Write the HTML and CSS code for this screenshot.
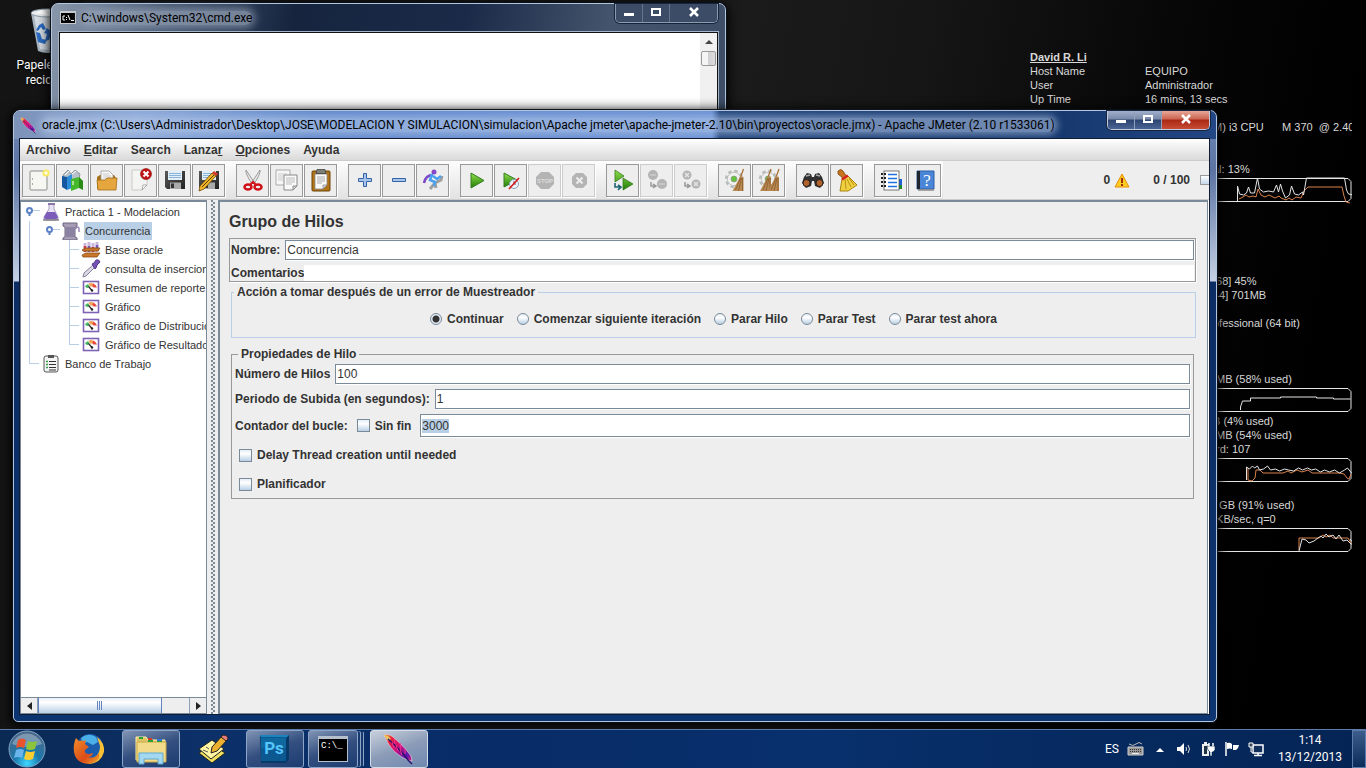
FILE: index.html
```html
<!DOCTYPE html>
<html lang="es">

<head>
    <meta charset="UTF-8">
    <meta name="viewport" content="width=device-width, initial-scale=1.0">
    <title>Apache JMeter</title>
    <link rel="stylesheet" href="styles.css">
</head>

<body>
    <svg class="defs" width="0" height="0" aria-hidden="true">
        <defs>
            <linearGradient id="green" x1="0" y1="0" x2="0" y2="1">
                <stop offset="0" stop-color="#8fe04a" />
                <stop offset="1" stop-color="#237c08" />
            </linearGradient>
            <linearGradient id="feather" x1="0" y1="0" x2="1" y2="1">
                <stop offset="0" stop-color="#f4a020" />
                <stop offset="0.2" stop-color="#e8203c" />
                <stop offset="0.5" stop-color="#d0107c" />
                <stop offset="0.8" stop-color="#5a18b0" />
                <stop offset="1" stop-color="#e02070" />
            </linearGradient>
            <linearGradient id="metal" x1="0" y1="0" x2="1" y2="1">
                <stop offset="0" stop-color="#5a5a5a" />
                <stop offset="1" stop-color="#222" />
            </linearGradient>
            <radialGradient id="orb" cx="0.5" cy="0.9" r="0.8">
                <stop offset="0" stop-color="#3fd8ff" />
                <stop offset="0.45" stop-color="#1a78ac" />
                <stop offset="1" stop-color="#48698c" />
            </radialGradient>
            <linearGradient id="fox" x1="0" y1="0" x2="1" y2="1">
                <stop offset="0" stop-color="#f08c28" />
                <stop offset="0.6" stop-color="#dc4c18" />
                <stop offset="1" stop-color="#f0a830" />
            </linearGradient>
        </defs>
        <symbol id="i-feather" viewBox="0 0 32 32">
            <path d="M1 2c4-1 7 0 10 3 6 5 12 11 17 18l1 5-4-1C17 24 8 17 4 8z" fill="url(#feather)" stroke="#f0d0e0" stroke-width="0.6" />
            <path d="M1 2l4 1 3 3-3 2z" fill="#e8c860" />
            <path d="M5 6c8 7 15 14 20 21l4 4" fill="none" stroke="#22106a" stroke-width="1.4" />
            <path d="M9 9l2 6M13 12l2 6M17 16l2 6M11 6l1 5M17 10l1 6M22 16l0 5" stroke="#f03090" stroke-width="1" fill="none" />
        </symbol>
        <symbol id="i-gauge" viewBox="0 0 20 19">
            <rect x="2.500" y="3.500" width="15" height="12" fill="#fff" stroke="#7d62b5" stroke-width="1.600" />
            <path d="M4 9a6 6 0 0 1 3-3l1.500 2.500-2 1.500z" fill="#3fb45f" />
            <path d="M7.500 5.500a7 7 0 0 1 5 0L11 8.500H9z" fill="#f2a254" />
            <path d="M12.500 5.500A7 7 0 0 1 16 9.500h-3.500L11 8z" fill="#e84b3c" />
            <path d="M7.500 8.500L11 12.500" stroke="#222" stroke-width="1.200" />
            <circle cx="11" cy="12.500" r="1.200" fill="#222" />
        </symbol>
        <symbol id="i-handle" viewBox="0 0 20 19">
            <path d="M11 8.500h8" stroke="#b8cfe5" />
            <path d="M8.500 9v5" stroke="#5b82b8" stroke-width="2" />
            <circle cx="8.500" cy="8.500" r="2.500" fill="#fff" stroke="#5b82c8" stroke-width="2" />
        </symbol>
        <symbol id="i-floppy" viewBox="0 0 24 24">
            <path d="M2 3h20v18H4l-2-2z" fill="url(#metal)" />
            <rect x="5" y="3" width="14" height="9" fill="#e4eef6" />
            <path d="M6 5.500h12M6 7.500h12M6 9.500h12" stroke="#88b4dc" />
            <rect x="7" y="14.500" width="11" height="6.500" fill="#aaa" />
            <rect x="8" y="15.500" width="3" height="4.500" fill="#333" />
        </symbol>
        <symbol id="i-broom" viewBox="0 0 12 24">
            <path d="M11 1L7 12" stroke="#a66a2c" stroke-width="1.2" />
            <path d="M8 8l3 1v14H0z" fill="#b98a52" />
            <path d="M8 10L3 22M9 10L6 23M10 10v13" stroke="#86592a" stroke-width="0.8" fill="none" />
        </symbol>
        <symbol id="i-gear" viewBox="0 0 24 24">
            <circle cx="12" cy="12" r="9" fill="none" stroke="#b9bdb9" stroke-width="4" stroke-dasharray="4 3.070" />
            <circle cx="12" cy="12" r="8" fill="#f0f0f0" stroke="#b9bdb9" />
            <circle cx="12" cy="12" r="3.500" fill="#62c43a" stroke="#8a9a80" />
        </symbol>
    </svg>

    <main class="desktop">
        <div class="shortcut">
            <svg width="40" height="48" viewBox="0 0 40 48" aria-hidden="true">
                <path d="M3 5l7 38q10 4 20 0l7-38z" fill="#a9b6c2" />
                <path d="M6 7l6 34 9 1 7-35z" fill="#d5dde4" />
                <ellipse cx="20" cy="5" rx="17" ry="4" fill="#e8edf0" stroke="#8b99a5" />
                <path d="M8 5l6-3 5 4 6-3 4 3-7 2z" fill="#fff" />
                <path d="M11 17l4-2 3 6-3 1-2-3-3 4-2-1zM19 20l5 4-3 8-4 1 2-7-3-1zM8 24l4 1 2 6 5 1-2 4-7-2z" fill="#2c6cc4" />
            </svg>
            <span>Papelera de reciclaje</span>
        </div>

        <div class="sysinfo">
            <b><u>David R. Li</u></b><span></span>
            <span>Host Name</span><span>EQUIPO</span>
            <span>User</span><span>Administrador</span>
            <span>Up Time</span><span>16 mins, 13 secs</span>
        </div>
        <div class="meters">
            <p>M) i3 CPU      M 370  @ 2.40GHz</p>
            <p></p>
            <p></p>
            <p>al: 13%</p>
            <svg width="139" height="28" viewBox="0 0 139 28">
                <path d="M-5 2.500H135l3 3v17l-3 3H-5" />
                <path class="orange" d="M26 23l4-2 3-2 3 2 4-1 3 1 2-8 3 6 4 2 4-2 6 3 4-2 2 2 5 2 3-2 3 2 4-3 5 1 3-7 4-4h34l2 9 2 6 4 1" />
                <path d="M24.500 25v-15l2 8 4 1 3-2 2-6 2 6 4 0 3-15 2 11 4 3 5-1 5 1 3-7 2 7 2-8 2 7 3 7 4-3 2-9 3 8 4 1 4-3 1 3 3-17h38l2 12 2 4 5 1" />
            </svg>
            <p></p>
            <p></p>
            <p></p>
            <p></p>
            <p></p>
            <p>[68] 45%</p>
            <p>44] 701MB</p>
            <p></p>
            <p>ofessional (64 bit)</p>
            <p></p>
            <p></p>
            <p></p>
            <p> MB (58% used)</p>
            <svg width="139" height="28" viewBox="0 0 139 28">
                <path d="M-5 2.500H135l3 3v17l-3 3H-5M27.500 24v-3l2-6h8v-3h30v-1h36v1h17v1h17" />
            </svg>
            <p>B (4% used)</p>
            <p> MB (54% used)</p>
            <p> rd: 107</p>
            <svg width="139" height="28" viewBox="0 0 139 28">
                <path d="M-5 2.500H135l3 3v17l-3 3H-5" />
                <path class="orange" d="M35 12v12l4 1 3-3 1-8h4l3 3h20l5-2 3 2 6-3 5 2 6-2 4 3h27l5 1 3 4 2 1 2-5" />
                <path d="M33.500 24v-13l3 2 3-3 2 2 3-2 2 4 4-1 4-3 3 4 5-1 4 2 5-2 4 1 5 1 5-3 4 2 5-2 4 2 4-1 5 3 4-2 5 2 5-2 5 3 5-3 3-2 4 5 3 1" />
            </svg>
            <p></p>
            <p>/ GB (91% used)</p>
            <p> KB/sec, q=0</p>
            <svg width="139" height="28" viewBox="0 0 139 28">
                <path d="M-5 2.500H135l3 3v17l-3 3H-5" />
                <path class="orange" d="M86 24v-12h20l4-3 3 2 4-2 3 3h15l3 5" />
                <path d="M86 25l3-12 4 1 3 3 5-2 4-3 3-2 2 2 3-4 3 3 4-2 3 4 3-4 4 6 4-1 4 4h3l-4-5" />
            </svg>
        </div>

        <section class="window cmd">
            <header class="titlebar">
                <svg width="16" height="16" viewBox="0 0 16 16" aria-hidden="true">
                    <rect y="1" width="16" height="13" fill="#c8ccd0" />
                    <rect x="1" y="3" width="14" height="10" />
                    <path d="M5 6H3v4h2M6.500 7v1M6.500 9v1M8 5l2 5M11 10.500h3" fill="none" stroke="#fff" />
                </svg>
                <span class="title">C:\windows\System32\cmd.exe</span>
                <div class="controls">
                    <button aria-label="Minimizar"><svg width="12" height="12"><path d="M1 7h10v3H1z" fill="#fff" /></svg></button>
                    <button aria-label="Maximizar"><svg width="12" height="12"><path d="M2 3h8v6H2z" fill="none" stroke="#fff" stroke-width="2" /></svg></button>
                    <button class="close" aria-label="Cerrar"><svg width="12" height="12"><path d="M2 2l8 8M10 2l-8 8" stroke="#fff" stroke-width="2.500" /></svg></button>
                </div>
            </header>
            <div class="console">
                <div class="vscroll"><i></i><b></b></div>
            </div>
        </section>

        <section class="window jmeter">
            <header class="titlebar">
                <svg width="17" height="17" aria-hidden="true"><use href="#i-feather" /></svg>
                <span class="title">oracle.jmx (C:\Users\Administrador\Desktop\JOSE\MODELACION Y SIMULACION\simulacion\Apache jmeter\apache-jmeter-2.10\bin\proyectos\oracle.jmx) - Apache JMeter (2.10 r1533061)</span>
                <div class="controls">
                    <button aria-label="Minimizar"><svg width="12" height="12"><path d="M1 7h10v3H1z" fill="#fff" /></svg></button>
                    <button aria-label="Maximizar"><svg width="12" height="12"><path d="M2 3h8v6H2z" fill="none" stroke="#fff" stroke-width="2" /></svg></button>
                    <button class="close" aria-label="Cerrar"><svg width="12" height="12"><path d="M2 2l8 8M10 2l-8 8" stroke="#fff" stroke-width="2.500" /></svg></button>
                </div>
            </header>

            <div class="client">
                <nav class="menubar">
                    <button>Archivo</button>
                    <button><u>E</u>ditar</button>
                    <button>Search</button>
                    <button>Lanza<u>r</u></button>
                    <button><u>O</u>pciones</button>
                    <button>Ayuda</button>
                </nav>

                <div class="toolbar">
                    <div class="group">
                        <button aria-label="Nuevo"><svg viewBox="0 0 24 24">
                            <rect x="3" y="3" width="17" height="19" rx="1" fill="#f6f6f3" stroke="#8c8e88" />
                            <path d="M5.500 10v2M5.500 15v2" stroke="#aaa" />
                            <circle cx="19" cy="5" r="3.500" fill="#fbe95c" /><circle cx="19" cy="5" r="1.800" fill="#fffde0" />
                        </svg></button>
                        <button aria-label="Plantillas"><svg viewBox="0 0 24 24">
                            <path d="M2 7l5-5 3 4 4-4 5 4-2 9H4z" fill="#b9c2ca" stroke="#8c959c" />
                            <path d="M4 7l4-4M10 7l5-4" stroke="#fff" />
                            <path d="M1 8l5 1v13l-5-3z" fill="#1458a0" />
                            <path d="M6 9l5-3v14l-5 2z" fill="#2b8cd8" />
                            <path d="M10 11l8-2v11l-8 3z" fill="#45b82c" />
                            <path d="M18 9l4 4v9l-4-2z" fill="#2a8c16" />
                            <path d="M12 13v4" stroke="#c8f0b8" stroke-width="1.500" />
                        </svg></button>
                        <button aria-label="Abrir"><svg viewBox="0 0 24 24">
                            <path d="M2 9l3-2h14l2 3v11H2z" fill="#a8701c" />
                            <path d="M6 3h8l4 4v8H6z" fill="#f8f8f8" stroke="#999" stroke-width="0.8" />
                            <path d="M8 6h6M8 8h8M8 10h8" stroke="#bbb" stroke-width="0.8" />
                            <path d="M2 12h8l2-2h10l-1 12H3z" fill="#e6a63e" stroke="#a36c18" stroke-width="0.8" />
                        </svg></button>
                        <button aria-label="Cerrar"><svg viewBox="0 0 24 24">
                            <path d="M3 2h15v15l-5 5H3z" fill="#f4f4f2" stroke="#c0c0bc" stroke-width="0.8" />
                            <path d="M18 17l-5 5 1-5z" fill="#fff" stroke="#999" stroke-width="0.8" />
                            <circle cx="17" cy="6" r="5.500" fill="#c01414" stroke="#8c0c0c" stroke-width="0.6" />
                            <path d="M14.500 3.500l5 5M19.500 3.500l-5 5" stroke="#fff" stroke-width="2" />
                        </svg></button>
                        <button aria-label="Guardar"><svg><use href="#i-floppy" /></svg></button>
                        <button aria-label="Guardar como"><svg viewBox="0 0 24 24">
                            <use href="#i-floppy" />
                            <path d="M3 18L15 5l4 3L7 21l-5 2z" fill="#f0b429" stroke="#6c4a08" stroke-width="0.8" />
                            <path d="M15 5l2-2 4 3-2 2z" fill="#d83a28" />
                            <path d="M5 19L17 7" stroke="#5a3e08" />
                        </svg></button>
                    </div>
                    <div class="group">
                        <button aria-label="Cortar"><svg viewBox="0 0 24 24">
                            <path d="M5 2q-1 3 6 14l2-2zM19 2q1 3-6 14l-2-2z" fill="#e8e8e8" stroke="#888" stroke-width="0.800" />
                            <ellipse cx="7" cy="19" rx="3.500" ry="2.500" fill="none" stroke="#d01018" stroke-width="2.500" />
                            <ellipse cx="17" cy="19" rx="3.500" ry="2.500" fill="none" stroke="#d01018" stroke-width="2.500" />
                            <path d="M9 17l3-3 3 3" stroke="#d01018" stroke-width="2" fill="none" />
                        </svg></button>
                        <button aria-label="Copiar"><svg viewBox="0 0 24 24">
                            <path d="M1 2h14v15H1z" fill="#f6f6f6" stroke="#aaa" />
                            <path d="M3 6h9M3 8h9M3 10h5M3 12h5" stroke="#ccc" />
                            <path d="M9 7h13v11l-4 4H9z" fill="#fafafa" stroke="#888" />
                            <path d="M11 10h9M11 12h9M11 14h9M11 16h6" stroke="#bbb" />
                            <path d="M22 18h-4v4z" fill="#ddd" stroke="#888" />
                        </svg></button>
                        <button aria-label="Pegar"><svg viewBox="0 0 24 24">
                            <rect x="3" y="3" width="18" height="20" rx="1" fill="#b27418" stroke="#6c4408" />
                            <path d="M6 6h12v11l-4 4H6z" fill="#fafafa" stroke="#888" stroke-width="0.800" />
                            <path d="M8 1.500h8l1 4H7z" fill="#7c8078" stroke="#444" stroke-width="0.800" />
                            <path d="M8 9h8M8 11h8M8 13h8M8 15h5" stroke="#aaa" />
                            <path d="M18 17h-4v4z" fill="#ddd" stroke="#888" stroke-width="0.800" />
                        </svg></button>
                    </div>
                    <div class="group">
                        <button aria-label="Expandir"><svg viewBox="0 0 24 24"><path d="M10.500 5.500h3v5h5v3h-5v5h-3v-5h-5v-3h5z" fill="#a8c4ec" stroke="#3464a4" /></svg></button>
                        <button aria-label="Contraer"><svg viewBox="0 0 24 24"><path d="M5.500 10.500h13v3h-13z" fill="#a8c4ec" stroke="#3464a4" /></svg></button>
                        <button aria-label="Conmutar"><svg viewBox="0 0 24 24">
                            <path d="M9 21l5-6 6-3 1-4M14 15l1 5" stroke="#a0a0a0" stroke-width="3" fill="none" />
                            <path d="M3 15c1-5 4-8 9-8" stroke="#7a48c8" stroke-width="2.500" fill="none" />
                            <circle cx="13" cy="4" r="2.500" fill="#8448c8" />
                            <path d="M11 6l-2 6 5 2-1 4M12 8l4 3 4-3" stroke="#48a0f0" stroke-width="2.500" fill="none" />
                        </svg></button>
                    </div>
                    <div class="group">
                        <button aria-label="Arrancar"><svg viewBox="0 0 24 24"><path d="M6 5l13 7.500L6 20z" fill="url(#green)" stroke="#357c20" /></svg></button>
                        <button aria-label="Arrancar sin pausas"><svg viewBox="0 0 24 24">
                            <path d="M5 5l13 7-13 7z" fill="url(#green)" stroke="#357c20" />
                            <circle cx="15" cy="16" r="4.500" fill="#eef4fa" stroke="#8aa4bc" /><path d="M15 13v3h2" stroke="#557" fill="none" />
                            <path d="M10 21L20 10" stroke="#d81818" stroke-width="1.600" />
                        </svg></button>
                        <button disabled aria-label="Parar"><svg viewBox="0 0 24 24"><path d="M8 4h8l5 5v7l-5 5H8l-5-5V9z" fill="#b4b4b4" /><text x="12" y="15" class="stop-text">STOP</text></svg></button>
                        <button disabled aria-label="Apagar"><svg viewBox="0 0 24 24"><path d="M9 5h7l4 4v7l-4 4H9l-4-4V9z" fill="#b4b4b4" /><path d="M9.500 9.500l6 6M15.500 9.500l-6 6" stroke="#eee" stroke-width="2" /></svg></button>
                    </div>
                    <div class="group">
                        <button aria-label="Arranque remoto"><svg viewBox="0 0 24 24">
                            <path d="M4 2l9 6-9 6zM12 10l10 6-10 6z" fill="url(#green)" stroke="#357c20" stroke-width="0.800" />
                            <path d="M4 15v4h5M7 17l3 2-3 3" fill="none" stroke="#1d6474" stroke-width="1.600" />
                        </svg></button>
                        <button disabled aria-label="Parada remota"><svg viewBox="0 0 24 24">
                            <circle cx="8" cy="7" r="5" fill="#b4b4b4" /><circle cx="17" cy="16" r="5" fill="#b4b4b4" />
                            <path d="M5 7h6M14 16h6" stroke="#ccc" stroke-width="1.500" />
                            <path d="M6 14v4h4M8 16l3 2-3 2" fill="none" stroke="#999" stroke-width="1.500" />
                        </svg></button>
                        <button disabled aria-label="Apagado remoto"><svg viewBox="0 0 24 24">
                            <circle cx="8" cy="7" r="4.500" fill="#b4b4b4" /><circle cx="17" cy="16" r="4.500" fill="#b4b4b4" />
                            <path d="M6 5l4 4M10 5L6 9M15 14l4 4M19 14l-4 4" stroke="#e4e4e4" stroke-width="1.500" />
                            <path d="M6 14v4h4M8 16l3 2-3 2" fill="none" stroke="#999" stroke-width="1.500" />
                        </svg></button>
                    </div>
                    <div class="group">
                        <button aria-label="Limpiar"><svg viewBox="0 0 24 24"><use href="#i-gear" x="1" y="1" width="20" height="20" /><use href="#i-broom" x="9" y="0" width="13" height="24" /></svg></button>
                        <button aria-label="Limpiar todo"><svg viewBox="0 0 24 24"><use href="#i-gear" x="1" y="1" width="20" height="20" /><use href="#i-broom" x="3" y="0" width="12" height="24" /><use href="#i-broom" x="11" y="0" width="12" height="24" /></svg></button>
                    </div>
                    <div class="group">
                        <button aria-label="Buscar"><svg viewBox="0 0 24 24">
                            <path d="M6 5l4 1 1 3h2l1-3 4-1 3 4 2 6-4 5-5-2-1-5h-2l-1 5-5 2-4-5 2-6z" fill="#303030" />
                            <path d="M5 8l4-1M15 7l4 1" stroke="#aaa" stroke-width="1.500" />
                            <circle cx="5.500" cy="15" r="3.500" fill="#b4622c" stroke="#222" /><circle cx="18.500" cy="15" r="3.500" fill="#b4622c" stroke="#222" />
                        </svg></button>
                        <button aria-label="Reiniciar búsqueda"><svg viewBox="0 0 24 24">
                            <path d="M3 3q3-3 5 0l4 6-3 2-6-5z" fill="#c8741c" stroke="#7c4408" stroke-width="0.800" />
                            <path d="M7 11l6-3 9 9-9 6H5z" fill="#f0d040" stroke="#a8840c" />
                            <path d="M7 11.500l6-4" stroke="#d82020" stroke-width="2.500" />
                            <path d="M10 11l1 10M12 11l4 8M14 10l5 7" stroke="#b89014" fill="none" />
                        </svg></button>
                    </div>
                    <div class="group">
                        <button aria-label="Funciones"><svg viewBox="0 0 24 24">
                            <path d="M19 11h4v6h-4z" fill="#2060d8" /><path d="M19 17h4v4h-4z" fill="#18882c" />
                            <rect x="5" y="3" width="15" height="19" fill="#fff" stroke="#555" stroke-width="0.800" />
                            <path d="M9 6.500h9M9 10.500h9M9 14.500h9M9 18.500h9" stroke="#1e70dc" stroke-width="1.600" />
                            <path d="M2 6h5M2 10h5M2 14h5M2 18h5" stroke="#222" stroke-width="2" stroke-dasharray="2 1" />
                        </svg></button>
                        <button aria-label="Ayuda"><svg viewBox="0 0 24 24">
                            <path d="M4 3h17v18H4z" fill="#4a86d8" stroke="#2c5ea8" /><path d="M4 3h3v18H4z" fill="#20242c" />
                            <path d="M5 22h16" stroke="#888" stroke-width="1.500" />
                            <text x="14" y="18" class="help-text">?</text>
                        </svg></button>
                    </div>
                    <div class="status">
                        <span>0</span>
                        <svg class="warn" width="16" height="15" viewBox="0 0 16 15"><path d="M8 1l7 13H1z" fill="#fccc20" stroke="#e89008" stroke-linejoin="round" /><path d="M8 5v5M8 11v2" stroke="#a02c08" stroke-width="2" /></svg>
                        <span class="threads">0 / 100</span>
                        <i class="lamp"></i>
                    </div>
                </div>

                <div class="split">
                    <aside class="tree-pane">
                        <ul class="tree">
                            <li>
                                <svg class="cell"><use href="#i-handle" /></svg>
                                <svg class="icon" viewBox="0 0 20 19">
                                    <path d="M8 2h5v5l4 8q1 3-2 3H5q-3 0-2-3l5-8z" fill="#e8e2f4" stroke="#a8a0c0" /><path d="M6 10h8l3 5q0 2-2 2H5q-2 0-2-2z" fill="#7c5cb8" /><path d="M7 2h7" stroke="#8878a8" stroke-width="2" /><path d="M2 18h16" stroke="#555" />
                                </svg>
                                <span>Practica 1 - Modelacion</span>
                            </li>
                            <li>
                                <i class="cell line"></i>
                                <svg class="cell"><use href="#i-handle" /></svg>
                                <svg class="icon" viewBox="0 0 20 19">
                                    <path d="M2 2h14v3l-2 1v10l2 1v2H2v-2l2-1V6L2 5z" fill="#a79db6" stroke="#6c6480" /><path d="M5 7h8M5 9h8M5 11h8M5 13h8M5 15h8" stroke="#71678c" /><path d="M14 8q4-4 4 0v3" fill="none" stroke="#9a86b8" stroke-width="1.500" />
                                </svg>
                                <span class="selected">Concurrencia</span>
                            </li>
                            <li>
                                <i class="cell line"></i><i class="cell"></i><i class="cell tee"></i>
                                <svg class="icon" viewBox="0 0 20 19">
                                    <path d="M4 3v9M8 2v10M12 3v9M16 2v10" stroke="#c8b8dc" stroke-width="3" /><path d="M4 6v6M12 7v5" stroke="#d03844" stroke-width="2.500" /><path d="M8 6v6M16 5v6" stroke="#7858b4" stroke-width="2.500" /><path d="M1 10l4-2h14l-2 3H2zM1 15l4-2h14l-3 4H2z" fill="#c8782c" stroke="#8c4c14" stroke-width="0.800" />
                                </svg>
                                <span>Base oracle</span>
                            </li>
                            <li>
                                <i class="cell line"></i><i class="cell"></i><i class="cell tee"></i>
                                <svg class="icon" viewBox="0 0 20 19">
                                    <path d="M2 18l1-4L12 6l2 2-9 9z" fill="#ddd8e8" stroke="#86809a" /><path d="M11 5l2-1 2-3q3-1 4 2l-3 3-1 3-1 1z" fill="#7452b4" stroke="#54388c" />
                                </svg>
                                <span>consulta de insercion</span>
                            </li>
                            <li>
                                <i class="cell line"></i><i class="cell"></i><i class="cell tee"></i>
                                <svg class="icon"><use href="#i-gauge" /></svg>
                                <span>Resumen de reporte</span>
                            </li>
                            <li>
                                <i class="cell line"></i><i class="cell"></i><i class="cell tee"></i>
                                <svg class="icon"><use href="#i-gauge" /></svg>
                                <span>Gráfico</span>
                            </li>
                            <li>
                                <i class="cell line"></i><i class="cell"></i><i class="cell tee"></i>
                                <svg class="icon"><use href="#i-gauge" /></svg>
                                <span>Gráfico de Distribución</span>
                            </li>
                            <li>
                                <i class="cell line"></i><i class="cell"></i><i class="cell ell"></i>
                                <svg class="icon"><use href="#i-gauge" /></svg>
                                <span>Gráfico de Resultados</span>
                            </li>
                            <li>
                                <i class="cell ell"></i>
                                <svg class="icon" viewBox="0 0 20 19">
                                    <rect x="3" y="2" width="14" height="16" rx="2" fill="#f4f4f4" stroke="#555" /><path d="M7 1h6v3H7z" fill="#555" /><path d="M8 7.500h7M8 10.500h7M8 13.500h7M8 16h7" stroke="#333" /><path d="M5 7.500h2M5 10.500h2M5 13.500h2" stroke="#38a048" stroke-width="1.500" />
                                </svg>
                                <span>Banco de Trabajo</span>
                            </li>
                        </ul>
                        <div class="hscroll">
                            <button aria-label="Izquierda"><svg width="5" height="8"><path d="M5 0v8L0 4z" fill="#222" /></svg></button>
                            <div class="track"><i class="thumb"></i></div>
                            <button aria-label="Derecha"><svg width="5" height="8"><path d="M0 0v8l5-4z" fill="#222" /></svg></button>
                        </div>
                    </aside>
                    <div class="divider"></div>

                    <form class="panel">
                        <h1>Grupo de Hilos</h1>
                        <div class="naming">
                            <div class="row">
                                <label for="nombre">Nombre:</label>
                                <input class="field" type="text" id="nombre" value="Concurrencia">
                            </div>
                            <div class="row comments">
                                <label for="comentarios">Comentarios</label>
                                <input type="text" id="comentarios">
                            </div>
                        </div>

                        <fieldset class="on-error">
                            <legend>Acción a tomar después de un error de Muestreador</legend>
                            <label><input type="radio" name="accion" checked>Continuar</label>
                            <label><input type="radio" name="accion">Comenzar siguiente iteración</label>
                            <label><input type="radio" name="accion">Parar Hilo</label>
                            <label><input type="radio" name="accion">Parar Test</label>
                            <label><input type="radio" name="accion">Parar test ahora</label>
                        </fieldset>

                        <fieldset class="threads-box">
                            <legend>Propiedades de Hilo</legend>
                            <div class="row">
                                <label for="hilos">Número de Hilos</label>
                                <input class="field" type="text" id="hilos" value="100">
                            </div>
                            <div class="row">
                                <label for="subida">Periodo de Subida (en segundos):</label>
                                <input class="field" type="text" id="subida" value="1">
                            </div>
                            <div class="row loop">
                                <label for="bucle">Contador del bucle:</label>
                                <label class="check"><input type="checkbox">Sin fin</label>
                                <input class="field" type="text" id="bucle" value="3000">
                            </div>
                            <label class="check"><input type="checkbox">Delay Thread creation until needed</label>
                            <label class="check"><input type="checkbox">Planificador</label>
                        </fieldset>
                    </form>
                </div>
            </div>
        </section>
    </main>

    <footer class="taskbar">
        <button class="start" aria-label="Inicio"><svg width="38" height="38" viewBox="0 0 38 38">
            <circle cx="19" cy="19" r="18" fill="url(#orb)" stroke="#7fa4c4" />
            <path d="M4 14a16 16 0 0 1 30 0q-15 6-30 0z" fill="#fff" opacity="0.300" />
            <path d="M10 10q4-3 8 0l-2 8q-4-2-8 0z" fill="#e8542c" />
            <path d="M20 11q4 2 9 0l-2 8q-5 2-9 0z" fill="#8cc43c" />
            <path d="M8 20q4-2 8 0l-2 8q-4-2-8 0z" fill="#6cb4ec" />
            <path d="M18 21q4 2 9 0l-2 8q-5 2-9 0z" fill="#fccc30" />
        </svg></button>
        <button class="task bare" aria-label="Firefox"><svg width="32" height="32" viewBox="0 0 32 32">
            <circle cx="17" cy="14" r="13" fill="#1c5cac" />
            <path d="M8 5q7-6 15-1l2 5-5 3-6-3-4 2z" fill="#4cb0e8" />
            <path d="M24 4q8 6 7 15-3 11-15 12l-2-4q13-2 13-14z" fill="#f8c034" />
            <path d="M3 5l3 3q3-1 5 0l2-1-1 4 4 3-4 3q-1 4 4 4l4-1q-1 4-5 4 7 2 11-4 2 8-9 11Q3 31 1 19 0 11 3 5z" fill="url(#fox)" />
        </svg></button>
        <button class="task" aria-label="Explorador"><svg width="34" height="32" viewBox="0 0 34 32">
            <path d="M2 4h10l2 3h17v20H2z" fill="#e0c464" stroke="#fff0b0" />
            <path d="M3 9h29v20H3z" fill="#f2dc8c" stroke="#c8a848" />
            <path d="M5 5h4M14 8h5M23 8h5" stroke="#28a038" stroke-width="2" /><path d="M14 6h4" stroke="#d83828" stroke-width="2" /><path d="M23 7h5" stroke="#2c78d4" stroke-width="2" />
            <path d="M5 31V20h24v11h-5v-5H10v5z" fill="#a4d8f0" stroke="#5ca8d0" />
        </svg></button>
        <button class="task bare" aria-label="Notas"><svg width="32" height="32" viewBox="0 0 32 32">
            <path d="M2 20l13-9 13 9-13 10z" fill="#f0e060" stroke="#222" /><path d="M2 16l13-9 12 9-13 10z" fill="#fff6a4" stroke="#222" />
            <path d="M14 20l1-6L26 2l5 4-11 12z" fill="#ecb030" stroke="#222" /><path d="M24 4l2-2q5 0 5 4l-2 2z" fill="#e47c7c" stroke="#222" /><path d="M6 17l5 2M9 14l3 2" stroke="#555" />
        </svg></button>
        <button class="task" aria-label="Photoshop"><svg width="30" height="30" viewBox="0 0 30 30"><path d="M0 1h29v24l-3 4H1z" fill="#063a68" /><path d="M0 1h29l-3 3H1z" fill="#1c84bc" /><path d="M1 3h25v24H1z" fill="#0c5890" /><path d="M1 4h25v10H1z" fill="#1068a0" /><text x="14" y="20" class="ps-text">Ps</text></svg></button>
        <button class="task stacked" aria-label="Símbolo del sistema"><svg width="30" height="26" viewBox="0 0 30 26"><path d="M0 0h30v26H0z" fill="#b4c0cc" /><path d="M1 3h28v22H1z" /><text x="3" y="12" class="dos-text">C:\_</text></svg></button>
        <button class="task active" aria-label="Apache JMeter"><svg width="32" height="32"><use href="#i-feather" /></svg></button>

        <div class="tray">
            <span class="lang">ES</span>
            <svg width="17" height="16" viewBox="0 0 17 16"><path d="M2 3q4 3 7 0t6 0" fill="none" stroke="#bbb" /><path d="M1 6h15v8H1z" fill="#999" stroke="#ccc" /><path d="M3 8.500h11M3 10.500h11" stroke="#333" stroke-dasharray="1 1" /><path d="M5 12.500h7" stroke="#eee" /></svg>
            <svg class="more" width="8" height="16" viewBox="0 0 8 16"><path d="M0 11l4-4 4 4z" fill="#fff" /></svg>
            <svg width="16" height="16" viewBox="0 0 16 16"><path d="M1 6h3l4-4v12l-4-4H1z" fill="#fff" /><path d="M10 6q1 2 0 4M12 4q3 4 0 8" fill="none" stroke="#ddd" /></svg>
            <svg width="16" height="16" viewBox="0 0 16 16"><path d="M2 3h7v12H2zM4 1h3v2H4z" fill="#eee" /><path d="M4 5h3v8H4z" fill="#234" /><path d="M7 5h8v4l-2 2h-1v4h-2v-4L8 9z" fill="#fff" stroke="#00204a" stroke-width="0.600" /><path d="M9 2v3M13 2v3" stroke="#fff" stroke-width="1.500" /></svg>
            <svg width="16" height="16" viewBox="0 0 16 16"><path d="M2 1v14" stroke="#fff" stroke-width="1.500" /><path d="M3 2q3-1 5 1v5Q6 7 3 8z" fill="#fff" /><path d="M9 4h6l-1 3-2 2H9z" fill="#fff" /></svg>
            <svg width="16" height="16" viewBox="0 0 16 16"><path d="M5 4h10v8H5z" fill="#12305c" stroke="#fff" stroke-width="1.500" /><path d="M6 14.500h8M10 12v2" stroke="#fff" stroke-width="1.500" /><path d="M1 2h4v4H1zM3 6v5h2" fill="#345" stroke="#fff" /></svg>
            <time class="clock">1:14<br>13/12/2013</time>
            <button class="show-desktop" aria-label="Mostrar escritorio"></button>
        </div>
    </footer>

    <script>
        // foco inicial con el valor del bucle seleccionado
        const bucle = document.getElementById('bucle');
        bucle.focus();
        bucle.select();
    </script>
</body>

</html>
```
FILE: styles.css
```css
* {
    box-sizing: border-box;
}

body {
    margin: 0;
    height: 100vh;
    display: flex;
    flex-direction: column;
    overflow: hidden;
    font-family: "Liberation Sans", Arial, sans-serif;
    font-size: 12px;
    background: #000;
}

button,
input {
    font: inherit;
    color: inherit;
    margin: 0;
    padding: 0;
    border: 0;
    background: none;
    outline: none;
}

.defs {
    position: absolute;
}

.desktop {
    position: relative;
    flex: 1;
    overflow: hidden;
    background: linear-gradient(100deg, #141414 0%, #1b1b1b 50%, #161616 62%, #060606 80%, #000 92%);
}

.shortcut {
    position: absolute;
    left: 10px;
    top: 8px;
    width: 76px;
    display: flex;
    flex-direction: column;
    align-items: center;
    gap: 2px;
    text-align: center;
    color: #fff;
    font-family: Roboto, sans-serif;
    line-height: 15px;
    text-shadow: 0 1px 2px #000;
}

/* monitor del escritorio */
.sysinfo,
.meters {
    position: absolute;
    color: #d8d8d8;
    font-size: 11px;
    line-height: 14px;
}

.sysinfo {
    left: 1030px;
    top: 50px;
    display: grid;
    grid-template-columns: 115px auto;
}

.meters {
    left: 1213px;
    top: 120px;
    width: 139px;
    overflow: hidden;
    white-space: pre;
    display: flex;
    flex-direction: column;
}

.meters p {
    margin: 0;
    height: 14px;
}

.meters svg path {
    fill: none;
    stroke: #e4e4e4;
}

.meters svg .orange {
    stroke: #d8824a;
}

/* ventanas */
.window {
    position: absolute;
    display: flex;
    flex-direction: column;
    padding: 0 7px 7px;
    border: 1px solid #b4c4dc;
    border-radius: 7px 7px 5px 5px;
    box-shadow: 0 0 0 1px #0a1018, 0 2px 12px 2px #000;
}

.titlebar {
    display: flex;
    align-items: center;
    gap: 5px;
    height: 28px;
    font-family: Roboto, sans-serif;
    color: #000;
}

.title {
    margin-right: auto;
    border-radius: 8px;
    line-height: 14px;
    white-space: nowrap;
}

.controls {
    align-self: flex-start;
    display: flex;
    border: 1px solid #c0cce0;
    border-top: 0;
    border-radius: 0 0 5px 5px;
    overflow: hidden;
    box-shadow: 0 0 0 1px #18243c;
}

.controls button {
    width: 27px;
    height: 18px;
    border-right: 1px solid #93a1b8;
    background: linear-gradient(#a0b0cc 0%, #7888a8 45%, #2c4470 50%, #4a6494 100%);
}

.controls .close {
    width: 47px;
    border-right: 0;
    background: linear-gradient(#e8a898 0%, #cc6450 45%, #a82814 50%, #c84c34 100%);
}

.cmd {
    left: 51px;
    top: 3px;
    width: 675px;
    height: 260px;
    background: linear-gradient(100deg, #8a98ac 0%, #445670 16%, #16243e 34%, #1a2a48 58%, #44546c 78%, #3c4c66 100%);
}

.cmd .titlebar {
    padding-left: 1px;
}

.cmd .title {
    background: rgba(150, 162, 182, 0.7);
    box-shadow: 0 0 8px 3px rgba(150, 162, 182, 0.7);
}

.cmd .controls button {
    background: #3c4c66;
    border-color: #64748c;
}

.cmd .controls {
    border-color: #8c9cb0;
}

.console {
    flex: 1;
    display: flex;
    justify-content: flex-end;
    border: 1px solid #111;
    outline: 1px solid #a4b4c8;
    background: #fff;
}

.vscroll {
    width: 17px;
    display: flex;
    flex-direction: column;
    align-items: center;
    background: #f0f0f0;
}

.vscroll i {
    margin: 7px 0;
    border: 4px solid transparent;
    border-top: 0;
    border-bottom: 4px solid #444;
}

.vscroll b {
    width: 15px;
    height: 15px;
    border: 1px solid #999;
    border-radius: 2px;
    background: linear-gradient(90deg, #f4f4f4 45%, #d0d0d4 50%, #ddd);
}

.jmeter {
    left: 13px;
    top: 110px;
    right: 149px;
    bottom: 7px;
    padding-left: 6px;
    background: linear-gradient(#7088b4 0, #5c74a4 60px, #c4d0e4 170px, #0c2c64 171px, #0c3470 100%);
}

.jmeter .titlebar {
    margin: 0 -7px 0 -6px;
    padding: 0 6px;
    border-radius: 6px 6px 0 0;
    background: linear-gradient(90deg, #7c92b8 0, #8ca8d8 120px, #6088cc 300px, #6890d4 698px, #1c4078 706px, #16386e 1040px, #234684 100%);
}

.jmeter .title {
    background: rgba(180, 200, 232, 0.55);
    box-shadow: 0 0 7px 3px rgba(180, 200, 232, 0.55);
}

.client {
    flex: 1;
    min-height: 0;
    display: flex;
    flex-direction: column;
    outline: 1px solid #101c34;
    background: #eee;
    color: #333;
}

.menubar {
    display: flex;
    align-items: center;
    gap: 13px;
    height: 22px;
    padding: 0 6px;
    border-bottom: 1px solid #ccc;
    background: linear-gradient(#fff, #dadada);
    font-weight: bold;
}

.toolbar {
    display: flex;
    align-items: center;
    gap: 11px;
    height: 39px;
    padding: 0 1px 0 2px;
    border-bottom: 1px solid #ccc;
    background: linear-gradient(#fdfdfd, #e2e2e2);
}

.toolbar .group {
    display: flex;
    gap: 1px;
}

.toolbar button {
    width: 33px;
    height: 33px;
    display: flex;
    align-items: center;
    justify-content: center;
    border: 1px solid #999;
    background: #eee;
    box-shadow: 1px 1px 0 #fff;
}

.toolbar button:disabled {
    border-color: #ccc;
}

.toolbar button svg {
    width: 24px;
    height: 24px;
}

.stop-text {
    font-size: 6px;
    font-weight: bold;
    text-anchor: middle;
    fill: #ddd;
}

.help-text {
    font-family: "Liberation Serif", serif;
    font-size: 17px;
    text-anchor: middle;
    fill: #fff;
}

.status {
    flex: 1;
    align-self: stretch;
    display: flex;
    align-items: center;
    justify-content: flex-end;
    gap: 4px;
    margin-right: -1px;
    margin-left: -9px;
    background: #eee;
    font-weight: bold;
}

.threads {
    margin-left: 19px;
}

.lamp {
    width: 9px;
    height: 10px;
    margin-left: 6px;
    border: 1px solid #999;
    border-right: 0;
    background: linear-gradient(#fff, #c4d8ec);
}

.split {
    flex: 1;
    min-height: 0;
    display: flex;
    background: #fff;
}

.tree-pane {
    width: 187px;
    display: flex;
    flex-direction: column;
    border: 1px solid #7a8a99;
    border-top-width: 2px;
    background: #fff;
    overflow: hidden;
}

.tree {
    flex: 1;
    margin: 0;
    padding: 0;
    list-style: none;
    font-size: 11px;
}

.tree li {
    display: flex;
    height: 19px;
    align-items: center;
    white-space: nowrap;
}

.tree span {
    margin-left: 3px;
    padding: 2px 2px 2px 1px;
}

.tree .selected {
    padding: 3px 2px 3px 1px;
    background: #b8cfe5;
}

.cell,
.icon {
    flex: none;
    width: 20px;
    height: 19px;
}

.line {
    background: linear-gradient(#b8cfe5, #b8cfe5) 8px 0 / 1px 100% no-repeat;
}

.tee {
    background: linear-gradient(#b8cfe5, #b8cfe5) 8px 0 / 1px 100% no-repeat, linear-gradient(#b8cfe5, #b8cfe5) 8px 9px / 10px 1px no-repeat;
}

.ell {
    background: linear-gradient(#b8cfe5, #b8cfe5) 8px 0 / 1px 9px no-repeat, linear-gradient(#b8cfe5, #b8cfe5) 8px 9px / 10px 1px no-repeat;
}

.hscroll {
    display: flex;
    height: 16px;
    border-top: 1px solid #7a8a99;
    background: #eee;
}

.hscroll button {
    width: 16px;
    display: flex;
    align-items: center;
    justify-content: center;
}

.track {
    flex: 1;
    border: 1px solid #8ca0b8;
    border-width: 0 1px;
}

.thumb {
    display: block;
    width: 82%;
    height: 100%;
    border: 1px solid #6382bf;
    border-width: 0 1px;
    background: linear-gradient(90deg, #6382bf 1px, transparent 1px 2px, #6382bf 2px 3px, transparent 3px 4px, #6382bf 4px 5px) center / 5px 9px no-repeat,
        linear-gradient(#e8f0f8, #fff 30%, #b8cfe5);
}

.divider {
    width: 11px;
    border: solid #eee;
    border-width: 0 3px 0 4px;
    background: radial-gradient(circle at 1px 1px, #7a8a99 0 1px, transparent 1px) 0 0 / 4px 4px,
        radial-gradient(circle at 1px 1px, #7a8a99 0 1px, transparent 1px) 2px 2px / 4px 4px,
        #eee;
}

/* panel derecho */
.panel {
    flex: 1;
    min-width: 0;
    margin-right: 1px;
    padding: 10px 11px 0 9px;
    border: 1px solid #7a8a99;
    border-width: 2px 1px 1px 2px;
    background: #eee;
    font-weight: bold;
}

.panel h1 {
    margin: 0 0 6px;
    font-size: 16px;
    line-height: 20px;
}

.naming {
    border: 1px solid #999;
    box-shadow: 1px 1px 0 #fff;
    padding: 1px 1px 0;
}

.row {
    display: flex;
    align-items: center;
    gap: 5px;
}

.row > input {
    flex: 1;
    min-width: 0;
    height: 20px;
    font-weight: normal;
}

.field {
    padding: 0 1px;
    border: 1px solid #7a8a99;
    background: #fff;
    box-shadow: 1px 1px 0 #fff;
}

.field::selection {
    background: #b8cfe5;
    color: #333;
}

.comments {
    gap: 0;
    margin-top: 5px;
}

.comments > input {
    height: 16px;
    background: #fff;
}

fieldset {
    margin: 0;
    min-width: 0;
    border: 1px solid #999;
}

legend {
    padding: 0 3px;
    line-height: 14px;
}

.on-error {
    display: flex;
    justify-content: center;
    gap: 13px;
    margin: 3px 0 9px 2px;
    padding: 12px 0 10px;
    border-color: #b8cfe5;
}

.on-error legend {
    margin-left: 2px;
}

.on-error label,
.check {
    display: flex;
    align-items: center;
    gap: 5px;
    line-height: 16px;
}

.on-error input,
.check input {
    appearance: none;
    width: 13px;
    height: 13px;
    border: 1px solid #7a8a99;
    background: linear-gradient(#e4edf6, #fff 35%, #b8cfe5);
}

.on-error input {
    width: 12px;
    height: 12px;
    border-radius: 50%;
}

.on-error input:checked {
    background: radial-gradient(circle, #333 0 3px, #e4edf6 4px);
}

.threads-box {
    display: flex;
    flex-direction: column;
    gap: 5px;
    margin: 0 2px;
    padding: 3px 3px 3px;
}

.threads-box legend {
    margin-left: 3px;
}

.threads-box > .check {
    margin: 5px 0 3px 4px;
}

.loop {
    gap: 9px;
}

.loop > input {
    height: 23px;
}

/* barra de tareas */
.taskbar {
    display: flex;
    align-items: center;
    height: 39px;
    padding-left: 8px;
    border-top: 1px solid #5c7cac;
    background: linear-gradient(90deg, #0a2a54 0, #0c3068 200px, #082c68 500px, #08306c 60%, #042454 100%);
    color: #fff;
    font-family: Roboto, sans-serif;
}

.start {
    height: 38px;
    margin-right: 14px;
}

.task {
    width: 58px;
    height: 38px;
    margin-right: 4px;
    display: flex;
    align-items: center;
    justify-content: center;
    border: 1px solid #8ca4c8;
    border-radius: 3px;
    background: linear-gradient(160deg, #8094b4, #344f80 50%, #1c3c70);
}

.task.bare {
    border-color: transparent;
    background: none;
}

.task.stacked {
    width: 50px;
    margin-right: 12px;
    box-shadow: 3px 0 0 -1px #16386c, 4px 0 0 -1px #8ca4c8, 7px 0 0 -2px #16386c, 8px 0 0 -2px #8ca4c8;
}

.task.active {
    background: linear-gradient(160deg, #c8d0dc, #8c9cb8 50%, #7088b0);
    border-color: #d4dce8;
}

.ps-text {
    font-size: 17px;
    font-weight: bold;
    text-anchor: middle;
    fill: #54c4fc;
}

.dos-text {
    font-family: "Liberation Mono", monospace;
    font-size: 9px;
    fill: #fff;
}

.tray {
    margin-left: auto;
    height: 100%;
    display: flex;
    align-items: center;
    gap: 8px;
}

.more {
    margin: 0 4px;
}

.clock {
    width: 68px;
    margin-left: 4px;
    text-align: center;
    line-height: 17px;
}

.show-desktop {
    width: 14px;
    height: 100%;
    border: 1px solid #5c7cac;
    background: linear-gradient(#3c5c8c, #0c2c5c);
}
```
